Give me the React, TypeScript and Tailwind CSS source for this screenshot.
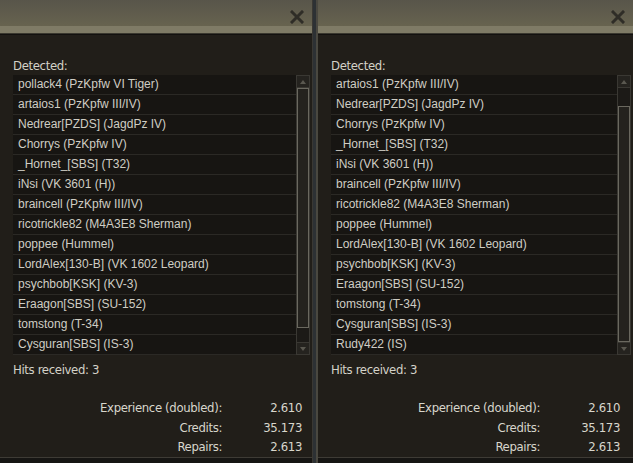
import React from 'react';

const leftList = [
  'pollack4 (PzKpfw VI Tiger)',
  'artaios1 (PzKpfw III/IV)',
  'Nedrear[PZDS] (JagdPz IV)',
  'Chorrys (PzKpfw IV)',
  '_Hornet_[SBS] (T32)',
  'iNsi (VK 3601 (H))',
  'braincell (PzKpfw III/IV)',
  'ricotrickle82 (M4A3E8 Sherman)',
  'poppee (Hummel)',
  'LordAlex[130-B] (VK 1602 Leopard)',
  'psychbob[KSK] (KV-3)',
  'Eraagon[SBS] (SU-152)',
  'tomstong (T-34)',
  'Cysguran[SBS] (IS-3)',
];

const rightList = [...leftList.slice(1), 'Rudy422 (IS)'];

const stats = [
  { label: 'Experience (doubled):', value: '2.610' },
  { label: 'Credits:', value: '35.173' },
  { label: 'Repairs:', value: '2.613' },
];

const narrow = "font-['DejaVu_Sans_Condensed',sans-serif] text-[13px] tracking-[-0.35px]";

function CloseIcon() {
  return (
    <svg width="14" height="14" viewBox="0 0 14 14">
      <path d="M2 2 L12 12 M12 2 L2 12" stroke="#2f2d27" strokeWidth="3" strokeLinecap="square" />
    </svg>
  );
}

function Scrollbar({ scrolled }: { scrolled: boolean }) {
  return (
    <div className="flex w-[14px] flex-col border border-[#3a3833] bg-[#1c1a17]">
      <div className="flex h-[12px] items-center justify-center border-b border-[#3a3833] bg-[#25231f]">
        <svg width="6" height="4" viewBox="0 0 6 4">
          <path d="M0 4 L3 0 L6 4 Z" fill="#5a5850" />
        </svg>
      </div>
      {scrolled && <div className="h-[18px]" />}
      <div className="flex-1 border border-[#6a685f] bg-[#24221e]" />
      {!scrolled && <div className="h-[14px]" />}
      <div className="flex h-[12px] items-center justify-center border-t border-[#3a3833] bg-[#25231f]">
        <svg width="6" height="4" viewBox="0 0 6 4">
          <path d="M0 0 L3 4 L6 0 Z" fill="#5a5850" />
        </svg>
      </div>
    </div>
  );
}

function Panel({
  items,
  scrolled,
  className,
}: {
  items: string[];
  scrolled: boolean;
  className?: string;
}) {
  return (
    <div className={`flex h-[463px] flex-col ${className ?? ''}`}>
      {/* Title bar */}
      <div className="flex h-[34px] flex-col">
        <div className="flex h-[26px] items-end justify-end bg-gradient-to-b from-[#58554a] to-[#67634f] pr-[8px]">
          <div className="mb-[2px]">
            <CloseIcon />
          </div>
        </div>
        <div className="h-[7px] bg-[#7f7b66]" />
        <div className="h-[1px] bg-[#3a382f]" />
      </div>

      {/* Body */}
      <div className="flex flex-1 flex-col border-t border-[#13110f] bg-[#211e19] pl-[13px] pr-[2px]">
        <div className={`${narrow} mt-[21px] h-[19px] leading-[19px] text-[#d4d2c8]`}>Detected:</div>
        <div className="flex h-[280px]">
          <div className="flex flex-1 flex-col">
            {items.map((t) => (
              <div
                key={t}
                className="h-[20px] border-b border-[#2b2925] bg-[#171512] pl-[5px] font-['Liberation_Sans',Arial,sans-serif] text-[12px] leading-[19px] text-[#cfcdc4]"
              >
                {t}
              </div>
            ))}
          </div>
          <Scrollbar scrolled={scrolled} />
        </div>
        <div className={`${narrow} mt-[5px] h-[19px] leading-[19px] text-[#d4d2c8]`}>
          Hits received: 3
        </div>
        <div className={`${narrow} mt-[19px] grid grid-cols-[209px_80px] leading-[19.5px] text-[#d8d6cc]`}>
          {stats.map((s) => (
            <React.Fragment key={s.label}>
              <div className="text-right">{s.label}</div>
              <div className="text-right">{s.value}</div>
            </React.Fragment>
          ))}
        </div>
        <div className="flex-1" />
      </div>
      <div className="h-[8px] border-t border-[#3e3b35] bg-[#161513]" />
    </div>
  );
}

export default function App() {
  return (
    <div className="flex h-[463px] w-[633px] overflow-hidden bg-[#2d3134]">
      <Panel items={leftList} scrolled={false} className="w-[313px] border-r border-[#3a3833]" />
      <div className="w-[3px] bg-[#2d3134]" />
      <Panel items={rightList} scrolled={true} className="w-[317px] border-l-2 border-[#4a4840]" />
    </div>
  );
}
